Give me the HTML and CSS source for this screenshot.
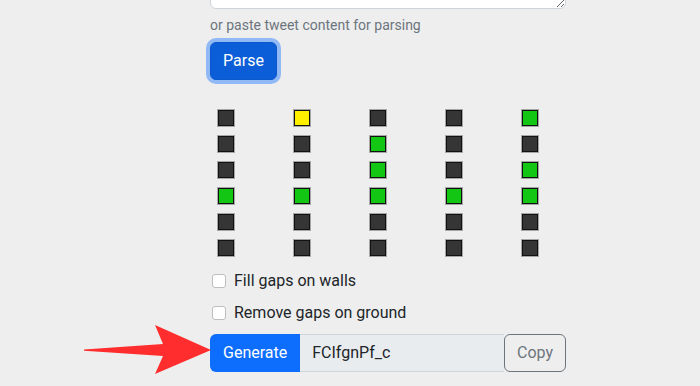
FILE: index.html
```html
<!DOCTYPE html>
<html lang="en">
<head>
  <meta charset="UTF-8">
  <title>Level generator</title>
  <meta name="viewport" content="width=device-width, initial-scale=1.0">
  <link rel="stylesheet" href="styles.css">
</head>
<body>

<div class="container">
  <textarea class="tweet-input" rows="3"></textarea>
  <div class="form-text">or paste tweet content for parsing</div>

  <button class="btn btn-parse">Parse</button>

  <div class="level-grid">
    <div class="cell"></div><div class="cell yellow"></div><div class="cell"></div><div class="cell"></div><div class="cell green"></div>
    <div class="cell"></div><div class="cell"></div><div class="cell green"></div><div class="cell"></div><div class="cell"></div>
    <div class="cell"></div><div class="cell"></div><div class="cell green"></div><div class="cell"></div><div class="cell green"></div>
    <div class="cell green"></div><div class="cell green"></div><div class="cell green"></div><div class="cell green"></div><div class="cell green"></div>
    <div class="cell"></div><div class="cell"></div><div class="cell"></div><div class="cell"></div><div class="cell"></div>
    <div class="cell"></div><div class="cell"></div><div class="cell"></div><div class="cell"></div><div class="cell"></div>
  </div>

  <label class="form-check">
    <input type="checkbox" class="check-input">
    <span>Fill gaps on walls</span>
  </label>
  <label class="form-check">
    <input type="checkbox" class="check-input">
    <span>Remove gaps on ground</span>
  </label>

  <div class="input-group">
    <button class="btn btn-generate">Generate</button>
    <input class="code-input" type="text" value="FCIfgnPf_c" readonly>
    <button class="btn btn-copy">Copy</button>
  </div>
</div>

<!-- annotation arrow -->
<svg class="arrow" width="700" height="386" viewBox="0 0 700 386">
  <polygon points="84,349.5 163,344 155,325 211,350 155,374 163,356 84,350.8" fill="#ff2d2d"/>
</svg>

</body>
</html>
```

FILE: styles.css
```css
body {
  font-family: "Segoe UI", Roboto, "Liberation Sans", sans-serif;
  background: #eeeeee;
  color: #212529;
  margin: 0;
  padding: 0;
  overflow: hidden;
}

.container {
  width: 356px;
  margin-left: 210px;
  display: flex;
  flex-direction: column;
  align-items: flex-start;
}

.tweet-input {
  box-sizing: border-box;
  width: 356px;
  height: 60px;
  margin: -51px 0 0 0;
  border: 1px solid #ced4da;
  border-radius: 6px;
  background: white;
  display: block;
}

.form-text {
  margin-top: 6px;
  font-size: 14px;
  line-height: 21px;
  color: #6c757d;
}

.btn {
  font-family: inherit;
  font-size: 16px;
  line-height: 24px;
  padding: 6px 12px;
  border: 1px solid transparent;
  border-radius: 6px;
  cursor: pointer;
}

.btn-parse {
  margin-top: 6px;
  background: #0b5ed7;
  border-color: #0a58ca;
  color: white;
  box-shadow: 0 0 0 4px rgba(49, 132, 253, 0.5);
}

.level-grid {
  margin-top: 30px;
  padding-left: 8px;
  display: grid;
  grid-template-columns: repeat(5, 76px);
  row-gap: 10px;
}

.cell {
  box-sizing: border-box;
  width: 16px;
  height: 16px;
  background: #353535;
  border: 1px solid #111;
  box-shadow: 0 0 0 1px rgba(0, 0, 0, 0.3);
}

.cell.green {
  background: #13c613;
}

.cell.yellow {
  background: #fff000;
}

.form-check {
  display: flex;
  align-items: center;
  font-size: 16px;
  line-height: 24px;
  margin-left: 2px;
}

.form-check:first-of-type {
  margin-top: 13px;
}

.form-check + .form-check {
  margin-top: 8px;
}

.check-input {
  appearance: none;
  width: 14px;
  height: 14px;
  margin: 0 8px 0 0;
  background: white;
  border: 1px solid #bdbdbd;
  border-radius: 3px;
}

.input-group {
  margin-top: 9px;
  display: flex;
  width: 356px;
}

.btn-generate {
  background: #0d6efd;
  color: white;
  border-radius: 6px 0 0 6px;
}

.code-input {
  flex: 1;
  min-width: 0;
  font-family: inherit;
  font-size: 16px;
  line-height: 24px;
  padding: 6px 12px;
  border: 1px solid #ced4da;
  border-left: none;
  border-right: none;
  background: #e9ecef;
  color: #212529;
  outline: none;
}

.btn-copy {
  background: transparent;
  border-color: #6c757d;
  color: #6c757d;
}

.arrow {
  position: absolute;
  left: 0;
  top: 0;
  pointer-events: none;
}
```
